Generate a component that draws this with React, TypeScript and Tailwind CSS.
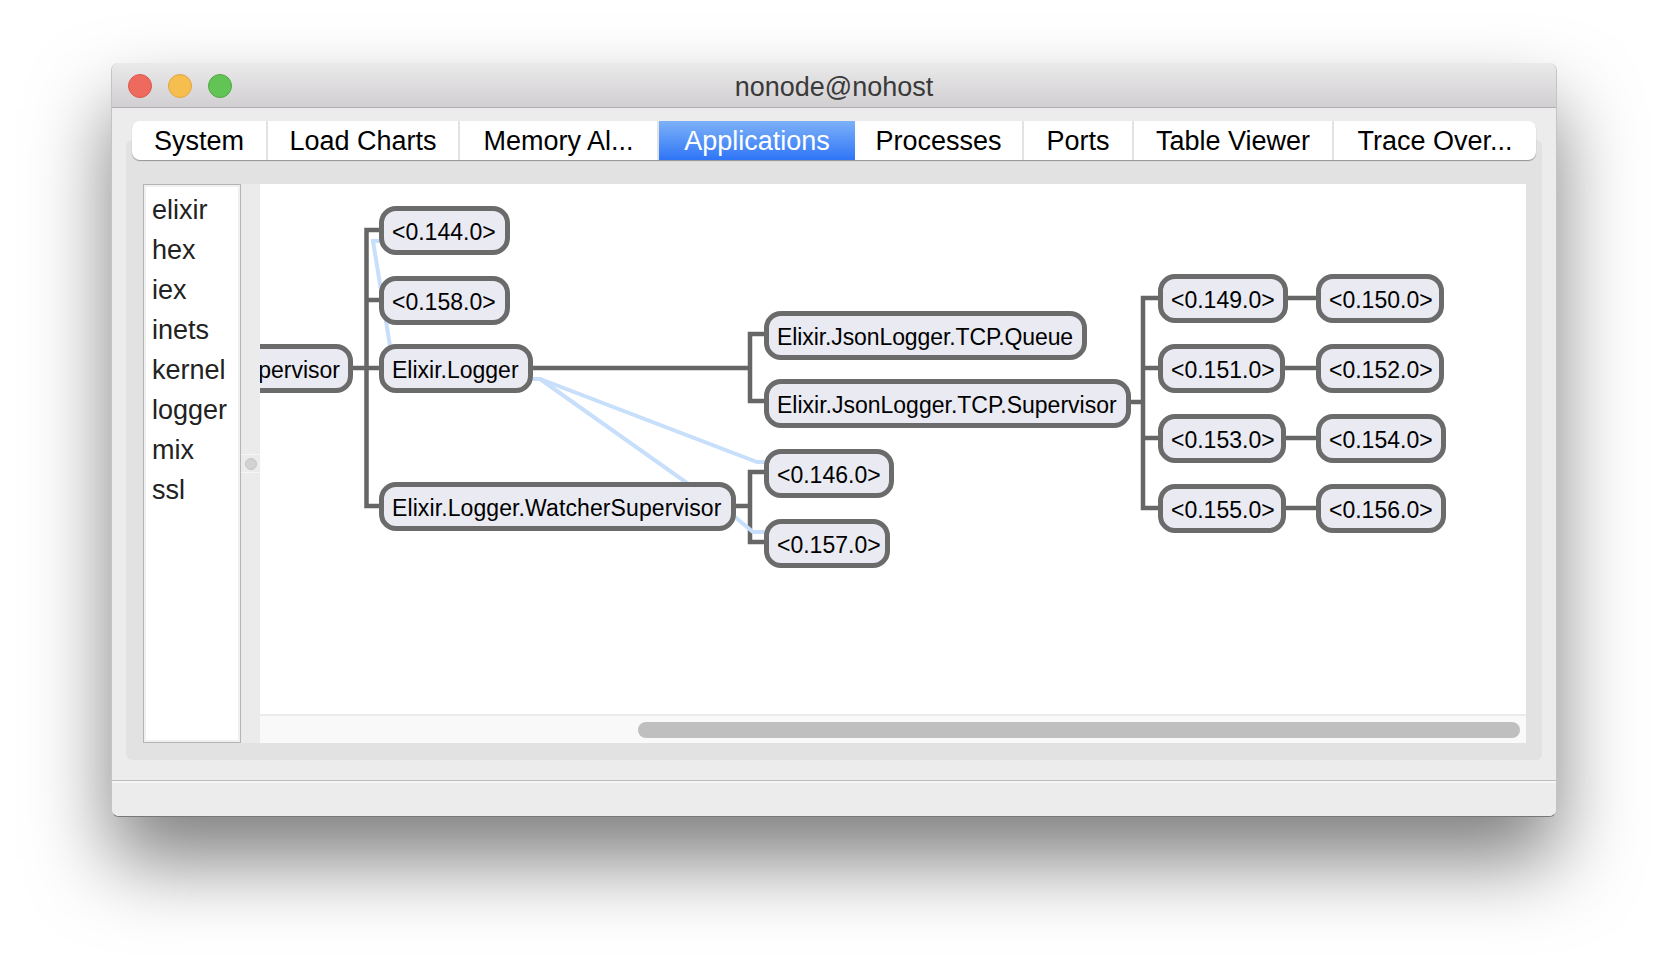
const tabs = [
  { label: 'System', width: 'w-[136px]' },
  { label: 'Load Charts', width: 'w-[192px]' },
  { label: 'Memory Al...', width: 'w-[199px]' },
  { label: 'Applications', width: 'w-[196px]', active: true },
  { label: 'Processes', width: 'w-[169px]' },
  { label: 'Ports', width: 'w-[110px]' },
  { label: 'Table Viewer', width: 'w-[200px]' },
  { label: 'Trace Over...', width: 'flex-1' },
]

const apps = ['elixir', 'hex', 'iex', 'inets', 'kernel', 'logger', 'mix', 'ssl']

const nodes = [
  { label: '<0.144.0>', place: 'left-[119px] top-[22px] w-[131px]' },
  { label: '<0.158.0>', place: 'left-[119px] top-[92px] w-[131px]' },
  { label: 'Supervisor', place: 'left-[-200px] top-[160px] w-[293px] justify-end pr-[6px]' },
  { label: 'Elixir.Logger', place: 'left-[119px] top-[160px] w-[154px]' },
  { label: 'Elixir.Logger.WatcherSupervisor', place: 'left-[119px] top-[298px] w-[357px] tracking-[0.1px]' },
  { label: 'Elixir.JsonLogger.TCP.Queue', place: 'left-[504px] top-[127px] w-[323px] tracking-[-0.1px]' },
  { label: 'Elixir.JsonLogger.TCP.Supervisor', place: 'left-[504px] top-[195px] w-[367px]' },
  { label: '<0.146.0>', place: 'left-[504px] top-[265px] w-[130px]' },
  { label: '<0.157.0>', place: 'left-[504px] top-[335px] w-[126px]' },
  { label: '<0.149.0>', place: 'left-[898px] top-[90px] w-[130px]' },
  { label: '<0.150.0>', place: 'left-[1056px] top-[90px] w-[128px]' },
  { label: '<0.151.0>', place: 'left-[898px] top-[160px] w-[127px]' },
  { label: '<0.152.0>', place: 'left-[1056px] top-[160px] w-[128px]' },
  { label: '<0.153.0>', place: 'left-[898px] top-[230px] w-[128px]' },
  { label: '<0.154.0>', place: 'left-[1056px] top-[230px] w-[130px]' },
  { label: '<0.155.0>', place: 'left-[898px] top-[300px] w-[128px]' },
  { label: '<0.156.0>', place: 'left-[1056px] top-[300px] w-[130px]' },
]

function Connectors() {
  return (
    <svg className="absolute left-0 top-0 h-[530px] w-[1266px]" fill="none">
      <g stroke="#666666" strokeWidth="4.5">
        <path d="M120 46H106.5V322H120M106.5 116H120M92 184H120" />
        <path d="M272 184H490M505 150H490V217H505" />
        <path d="M475 322H490M505 288H490V358H505" />
        <path d="M870 218H883M899 114H883V324H899M883 184H899M883 254H899" />
        <path d="M1027 114H1057M1024 184H1057M1025 254H1057M1025 324H1057" />
      </g>
      <g stroke="#c8dffc" strokeWidth="4">
        <path d="M130 162L113 57H121" />
        <path d="M272 195H280L497 278H505" />
        <path d="M280 195L475 333L493 348H505" />
      </g>
    </svg>
  )
}

export default function App() {
  return (
    <div className="min-h-[976px] bg-white pl-[111px] pt-[63px] font-['Liberation_Sans',sans-serif]">
      <div className="flex h-[754px] w-[1446px] flex-col overflow-hidden rounded-[8px] border-x border-b border-x-[#c4c4c4] border-b-[#777777] bg-[#ececec] shadow-[0_44px_80px_rgba(0,0,0,0.5)]">
        <div className="relative flex h-[45px] shrink-0 items-center justify-center border-b border-[#b0aeb0] bg-gradient-to-b from-[#ebeaeb] to-[#d1cfd1] pt-[4px] text-[27px] text-[#3a3a3a]">
          <div className="absolute left-[16px] top-[11px] flex gap-[16px]">
            <span className="h-[24px] w-[24px] rounded-full border border-[#e0574c] bg-[#ee6a5f]" />
            <span className="h-[24px] w-[24px] rounded-full border border-[#e1a73e] bg-[#f6bd4f]" />
            <span className="h-[24px] w-[24px] rounded-full border border-[#53a942] bg-[#61c454]" />
          </div>
          nonode@nohost
        </div>

        <div className="flex min-h-0 flex-1 flex-col px-[14px] pt-[13px]">
          <div className="relative z-10 mx-[6px] flex h-[39px] shrink-0 overflow-hidden rounded-[8px] bg-white shadow-[0_1px_1px_rgba(0,0,0,0.35)]">
            {tabs.map((tab) => (
              <div
                key={tab.label}
                className={`flex items-center justify-center pt-[2px] text-[27px] ${tab.width} ${
                  tab.active
                    ? 'bg-gradient-to-b from-[#7db0f7] to-[#2e74f7] text-white'
                    : 'border-r-2 border-[#e3e3e3] text-black last:border-r-0'
                }`}
              >
                {tab.label}
              </div>
            ))}
          </div>

          <div className="mt-[-20px] flex h-[620px] shrink-0 rounded-[6px] bg-[#e2e2e2] pb-[17px] pl-[17px] pr-[16px] pt-[44px]">
            <div className="w-[98px] shrink-0 border border-[#b4b4b4] bg-white px-[8px] py-[5px] shadow-[inset_0_0_0_2px_#f0f0f0]">
              {apps.map((app) => (
                <div key={app} className="h-[40px] text-[27px] leading-[40px] text-[#222222]">
                  {app}
                </div>
              ))}
            </div>

            <div className="flex w-[19px] shrink-0 flex-col justify-center bg-[#ebebeb]">
              <div className="flex h-[19px] items-center justify-center border-y border-[#f6f6f6]">
                <span className="h-[12px] w-[12px] rounded-full border border-[#c4c4c4] bg-[#d2d2d2]" />
              </div>
            </div>

            <div className="flex min-w-0 flex-1 flex-col bg-white">
              <div className="relative min-h-0 flex-1 overflow-hidden">
                <Connectors />
                {nodes.map((node) => (
                  <div
                    key={node.label}
                    className={`absolute flex h-[49px] items-center rounded-[17px] border-[5px] border-[#6b6b6b] bg-[#e9eaf2] pl-[8px] pr-[8px] pt-[4px] text-[23px] text-black ${node.place}`}
                  >
                    <span className="whitespace-nowrap">{node.label}</span>
                  </div>
                ))}
              </div>
              <div className="flex h-[29px] shrink-0 items-center justify-end border-t-2 border-[#ebebeb] bg-[#f9f9f9] pr-[6px]">
                <div className="h-[16px] w-[882px] rounded-full bg-[#bfbfbf]" />
              </div>
            </div>
          </div>

          <div className="flex-1" />
        </div>

        <div className="h-[36px] shrink-0 border-t border-[#bcbcbc] bg-[#ececec] shadow-[inset_0_2px_0_#f6f6f6]" />
      </div>
    </div>
  )
}
